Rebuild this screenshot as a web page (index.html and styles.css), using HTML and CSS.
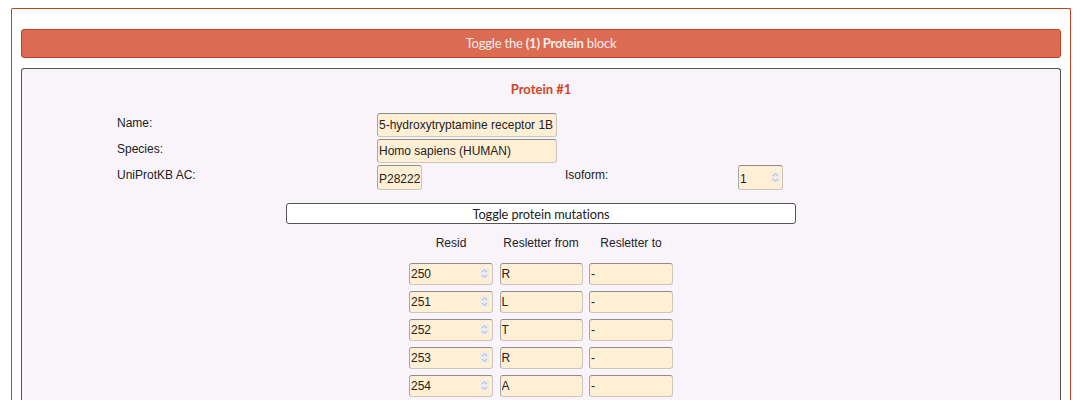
FILE: index.html
```html
<!DOCTYPE html>
<html>
<head>
<meta charset="utf-8">
<link rel="stylesheet" href="styles.css">
</head>
<body>
<div class="outer">
  <div class="bar">Toggle the <b>(1) Protein</b> block</div>
  <div class="block">
    <div class="title">Protein #1</div>
    <div class="form">
      <div class="lbl">Name:</div>
      <div class="cell span3"><input class="inp w180" type="text" value="5-hydroxytryptamine receptor 1B"></div>
      <div class="lbl">Species:</div>
      <div class="cell span3"><input class="inp w180" type="text" value="Homo sapiens (HUMAN)"></div>
      <div class="lbl">UniProtKB AC:</div>
      <div class="cell"><input class="inp w45 tall" type="text" value="P28222"></div>
      <div class="lbl">Isoform:</div>
      <div class="cell"><span class="num"><input class="inp w45 tall" type="text" value="1"><span class="spin"><svg width="9" height="11" viewBox="0 0 9 11"><path d="M2 4 L4.5 1.8 L7 4 M2 7 L4.5 9.2 L7 7" fill="none" stroke="#b0b0b0" stroke-width="1"/></svg></span></span></div>
    </div>
    <div class="mutwrap"><button class="mutbtn">Toggle protein mutations</button></div>
    <div class="muts">
      <div class="hd">Resid</div><div class="hd">Resletter from</div><div class="hd">Resletter to</div>
      <span class="num"><input class="inp c" type="text" value="250"><span class="spin s2"><svg width="9" height="11" viewBox="0 0 9 11"><path d="M2 4 L4.5 1.8 L7 4 M2 7 L4.5 9.2 L7 7" fill="none" stroke="#b0b0b0" stroke-width="1"/></svg></span></span>
      <input class="inp c" type="text" value="R"><input class="inp c" type="text" value="-">
      <span class="num"><input class="inp c" type="text" value="251"><span class="spin s2"><svg width="9" height="11" viewBox="0 0 9 11"><path d="M2 4 L4.5 1.8 L7 4 M2 7 L4.5 9.2 L7 7" fill="none" stroke="#b0b0b0" stroke-width="1"/></svg></span></span>
      <input class="inp c" type="text" value="L"><input class="inp c" type="text" value="-">
      <span class="num"><input class="inp c" type="text" value="252"><span class="spin s2"><svg width="9" height="11" viewBox="0 0 9 11"><path d="M2 4 L4.5 1.8 L7 4 M2 7 L4.5 9.2 L7 7" fill="none" stroke="#b0b0b0" stroke-width="1"/></svg></span></span>
      <input class="inp c" type="text" value="T"><input class="inp c" type="text" value="-">
      <span class="num"><input class="inp c" type="text" value="253"><span class="spin s2"><svg width="9" height="11" viewBox="0 0 9 11"><path d="M2 4 L4.5 1.8 L7 4 M2 7 L4.5 9.2 L7 7" fill="none" stroke="#b0b0b0" stroke-width="1"/></svg></span></span>
      <input class="inp c" type="text" value="R"><input class="inp c" type="text" value="-">
      <span class="num"><input class="inp c" type="text" value="254"><span class="spin s2"><svg width="9" height="11" viewBox="0 0 9 11"><path d="M2 4 L4.5 1.8 L7 4 M2 7 L4.5 9.2 L7 7" fill="none" stroke="#b0b0b0" stroke-width="1"/></svg></span></span>
      <input class="inp c" type="text" value="A"><input class="inp c" type="text" value="-">
    </div>
  </div>
</div>
</body>
</html>
```
FILE: styles.css
```css
html, body { margin: 0; padding: 0; background: #fff; }
body { font-family: "Liberation Sans", Arial, sans-serif; font-size: 12px; color: #222; }
.outer {
  margin: 8px 0 0 11px;
  width: 1040px;
  border: 1px solid #c4401f;
  border-radius: 2px;
  border-bottom: none;
  padding: 20px 9px 0 9px;
  height: 400px;
}
.bar {
  height: 27px;
  border: 1px solid #c4401f;
  border-radius: 3px;
  background: #db6b53;
  color: #fbeee9;
  font-family: Lato, "Noto Sans", sans-serif;
  font-size: 13px;
  line-height: 27px;
  text-align: center;
  letter-spacing: -0.2px;
}
.bar b { font-weight: 700; }
.block {
  margin-top: 10px;
  border: 1px solid #555;
  border-radius: 3px;
  border-bottom: none;
  background: #f8f4fa;
  height: 400px;
}
.title {
  font-family: Lato, "Noto Sans", sans-serif;
  font-weight: 700;
  font-size: 13px;
  color: #cf4528;
  text-align: center;
  margin-top: 12px;
  height: 16px;
  line-height: 16px;
}
.form {
  display: grid;
  grid-template-columns: 260px 188px 173px auto;
  grid-auto-rows: auto;
  row-gap: 2px;
  margin: 16px 0 0 95px;
}
.lbl { padding-top: 3px; line-height: 14px; }
.span3 { grid-column: span 3; }
.inp {
  box-sizing: border-box;
  background: #ffefd5;
  border: 1px solid #cdc6bd;
  border-top-color: #8d8d8d;
  border-left-color: #a8a8a8;
  border-radius: 3px;
  font-family: "Liberation Sans", Arial, sans-serif;
  font-size: 12px;
  color: #222;
  padding: 0 1px;
  height: 24px;
  margin: 0;
  outline: none;
  display: block;
}
.w180 { width: 180px; }
.w45 { width: 45px; }
.tall { height: 25px; padding-top: 3px; }
.num { position: relative; display: block; width: max-content; }
.spin {
  position: absolute;
  right: 3px; top: 7px;
  width: 9px; height: 11px;
  background: #ececec;
  display: flex;
}
.spin.s2 { top: 5px; right: 4px; }
.mutwrap { display: flex; justify-content: center; margin-top: 13px; }
.mutbtn {
  width: 510px;
  height: 21px;
  border: 1px solid #555;
  border-radius: 3px;
  background: #fff;
  font-family: Lato, "Noto Sans", sans-serif;
  font-size: 12.8px;
  letter-spacing: -0.1px;
  color: #222;
  padding: 0;
  margin: 0;
}
.muts {
  display: grid;
  grid-template-columns: 84px 83px 84px;
  column-gap: 6.5px;
  row-gap: 6px;
  justify-content: center;
  margin-top: 12px;
}
.hd { text-align: center; height: 21px; line-height: 14px; }
.inp.c { width: 100%; height: 22px; }
.muts .num { width: 100%; }
.muts .num .inp { width: 84px; }
```
